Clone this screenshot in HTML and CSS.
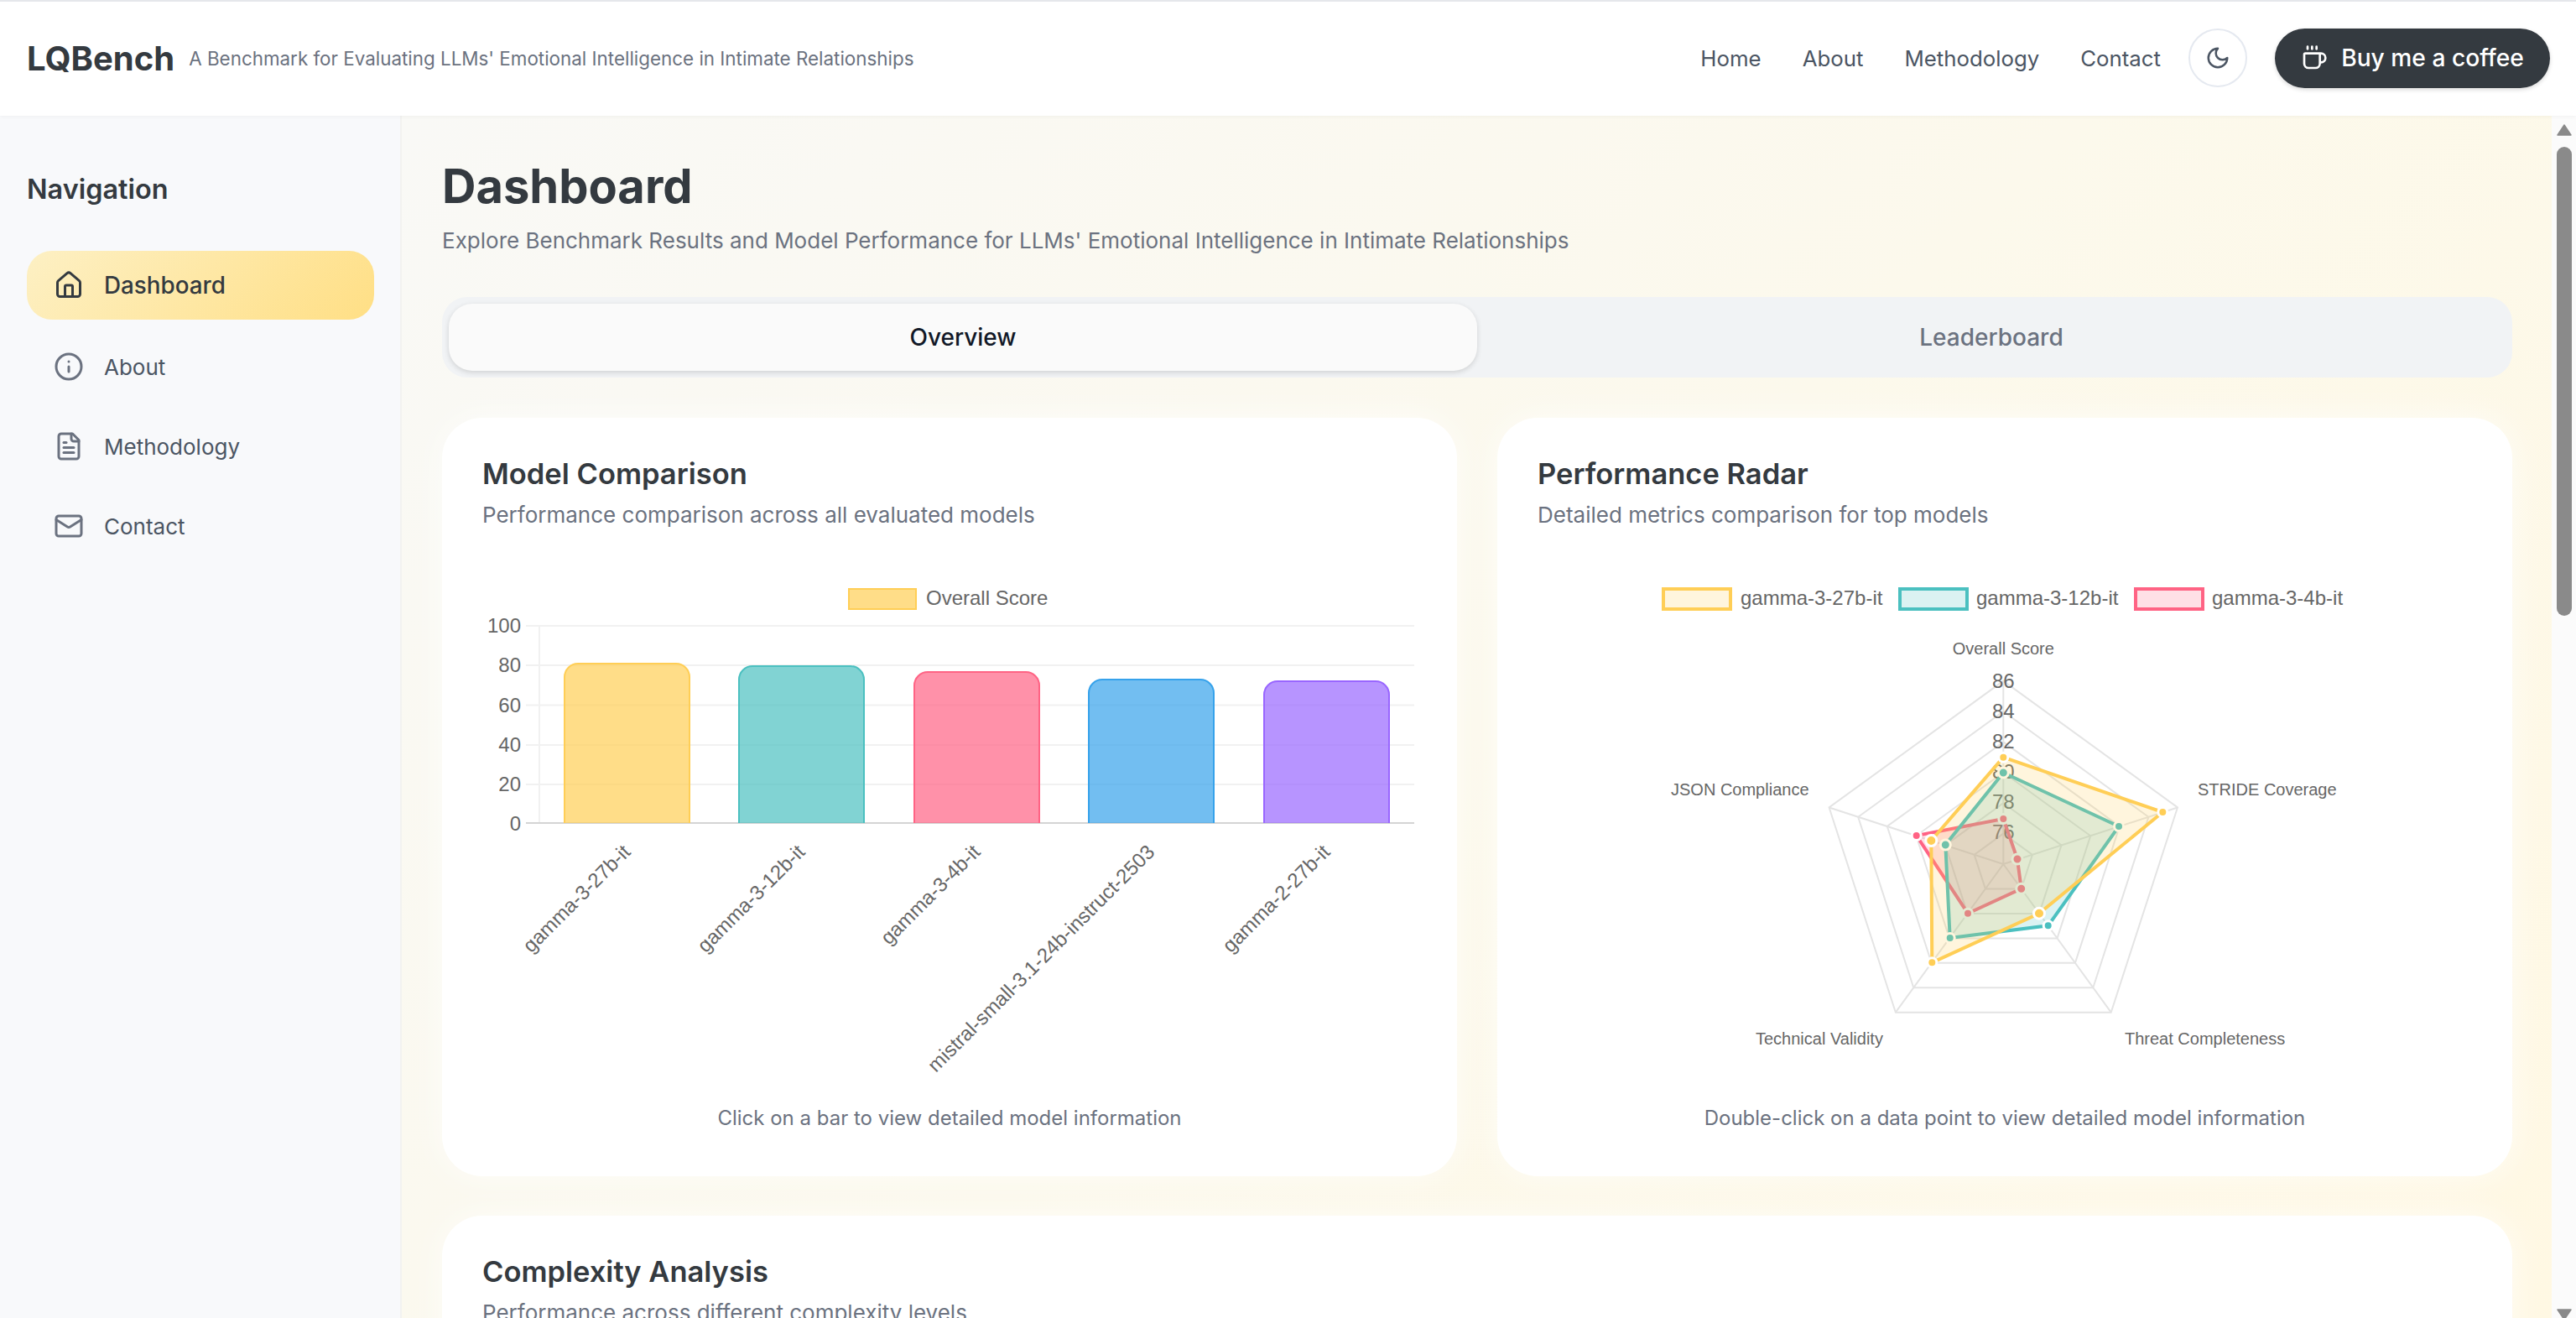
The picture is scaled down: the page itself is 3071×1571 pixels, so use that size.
FILE: index.html
```html
<!DOCTYPE html>
<html lang="en">
<head>
<meta charset="utf-8">
<title>LQBench</title>
<link rel="stylesheet" href="styles.css">
</head>
<body>
<header class="topbar">
  <div class="brand">
    <span class="brand-name">LQBench</span>
    <span class="brand-tag">A Benchmark for Evaluating LLMs' Emotional Intelligence in Intimate Relationships</span>
  </div>
  <nav class="topnav">
    <a>Home</a><a>About</a><a>Methodology</a><a>Contact</a>
    <button class="theme-btn" aria-label="Theme">
      <svg class="ico-moon" viewBox="0 0 24 24"><path d="M12 3a6 6 0 0 0 9 9 9 9 0 1 1-9-9Z"/></svg>
    </button>
    <button class="coffee-btn">
      <svg class="ico-coffee" viewBox="0 0 24 24"><path d="M10 2v2"/><path d="M14 2v2"/><path d="M16 8a1 1 0 0 1 1 1v8a4 4 0 0 1-4 4H7a4 4 0 0 1-4-4V9a1 1 0 0 1 1-1h14a4 4 0 1 1 0 8h-1"/><path d="M6 2v2"/></svg>
      <span>Buy me a coffee</span>
    </button>
  </nav>
</header>
<div class="layout">
  <aside class="sidebar">
    <h2 class="side-title">Navigation</h2>
    <a class="side-item active">
      <svg class="ico" viewBox="0 0 24 24"><path d="M15 21v-8a1 1 0 0 0-1-1h-4a1 1 0 0 0-1 1v8"/><path d="M3 10a2 2 0 0 1 .709-1.528l7-5.999a2 2 0 0 1 2.582 0l7 5.999A2 2 0 0 1 21 10v9a2 2 0 0 1-2 2H5a2 2 0 0 1-2-2z"/></svg>
      <span>Dashboard</span>
    </a>
    <a class="side-item">
      <svg class="ico" viewBox="0 0 24 24"><circle cx="12" cy="12" r="10"/><path d="M12 16v-4"/><path d="M12 8h.01"/></svg>
      <span>About</span>
    </a>
    <a class="side-item">
      <svg class="ico" viewBox="0 0 24 24"><path d="M15 2H6a2 2 0 0 0-2 2v16a2 2 0 0 0 2 2h12a2 2 0 0 0 2-2V7Z"/><path d="M14 2v4a2 2 0 0 0 2 2h4"/><path d="M10 9H8"/><path d="M16 13H8"/><path d="M16 17H8"/></svg>
      <span>Methodology</span>
    </a>
    <a class="side-item">
      <svg class="ico" viewBox="0 0 24 24"><rect width="20" height="16" x="2" y="4" rx="2"/><path d="m22 7-8.97 5.7a1.94 1.94 0 0 1-2.06 0L2 7"/></svg>
      <span>Contact</span>
    </a>
  </aside>
  <main class="main">
    <h1 class="page-title">Dashboard</h1>
    <p class="page-sub">Explore Benchmark Results and Model Performance for LLMs' Emotional Intelligence in Intimate Relationships</p>
    <div class="tabs">
      <button class="tab current">Overview</button>
      <button class="tab">Leaderboard</button>
    </div>
    <div class="grid">
      <section class="card">
        <h3 class="card-title">Model Comparison</h3>
        <p class="card-sub">Performance comparison across all evaluated models</p>
        <svg class="chart" viewBox="576 680 1114 620">
          <rect class="lg-y" x="1013" y="702" width="80" height="24"/>
          <text class="tx" x="1105" y="721">Overall Score</text>
          <g class="grid-lines">
            <path d="M628 746H1687M628 793H1687M628 840.500H1687M628 888H1687M628 935H1687M644 746V981"/>
          </g>
          <path class="axis" d="M628 981H1687"/>
          <path class="b-y" d="M674 981V807a16 16 0 0 1 16-16H807a16 16 0 0 1 16 16V981"/>
          <path class="b-t" d="M882 981V810a16 16 0 0 1 16-16H1015a16 16 0 0 1 16 16V981"/>
          <path class="b-p" d="M1091 981V817a16 16 0 0 1 16-16H1224a16 16 0 0 1 16 16V981"/>
          <path class="b-b" d="M1299 981V826a16 16 0 0 1 16-16H1432a16 16 0 0 1 16 16V981"/>
          <path class="b-v" d="M1508 981V828a16 16 0 0 1 16-16H1641a16 16 0 0 1 16 16V981"/>
          <g class="tx end">
            <text x="622" y="754">100</text>
            <text x="622" y="801">80</text>
            <text x="622" y="849">60</text>
            <text x="622" y="896">40</text>
            <text x="622" y="943">20</text>
            <text x="622" y="990">0</text>
          </g>
          <g class="tx end">
            <text transform="translate(754 1017) rotate(-45)">gamma-3-27b-it</text>
            <text transform="translate(962 1017) rotate(-45)">gamma-3-12b-it</text>
            <text transform="translate(1171 1017) rotate(-45)">gamma-3-4b-it</text>
            <text transform="translate(1379 1017) rotate(-45)">mistral-small-3.1-24b-instruct-2503</text>
            <text transform="translate(1588 1017) rotate(-45)">gamma-2-27b-it</text>
          </g>
        </svg>
        <p class="caption">Click on a bar to view detailed model information</p>
      </section>
      <section class="card">
        <h3 class="card-title">Performance Radar</h3>
        <p class="card-sub">Detailed metrics comparison for top models</p>
        <svg class="chart" viewBox="1833 680 1114 620">
          <rect class="lg-1" x="1983" y="702" width="80" height="24"/>
          <text class="tx" x="2075" y="721">gamma-3-27b-it</text>
          <rect class="lg-2" x="2265" y="702" width="80" height="24"/>
          <text class="tx" x="2356" y="721">gamma-3-12b-it</text>
          <rect class="lg-3" x="2546" y="702" width="80" height="24"/>
          <text class="tx" x="2637" y="721">gamma-3-4b-it</text>
          <g class="rings">
            <path d="M2388.300 811.600L2596 962.500L2516.700 1206.700H2259.900L2180.600 962.500Z"/>
            <path d="M2388.300 848L2561.400 973.800L2495.300 1177.200H2281.300L2215.200 973.800Z"/>
            <path d="M2388.300 884.400L2526.800 985L2473.900 1147.800H2302.700L2249.800 985Z"/>
            <path d="M2388.300 920.800L2492.200 996.300L2452.500 1118.400H2324.100L2284.400 996.300Z"/>
            <path d="M2388.300 957.200L2457.500 1007.500L2431.100 1088.900H2345.500L2319.100 1007.500Z"/>
            <path d="M2388.300 993.600L2422.900 1018.800L2409.700 1059.400H2366.900L2353.700 1018.800Z"/>
            <path d="M2388.300 1030V811.600M2388.300 1030L2596 962.500M2388.300 1030L2516.700 1206.700M2388.300 1030L2259.900 1206.700M2388.300 1030L2180.600 962.500"/>
          </g>
          <g class="tx small">
            <text class="mid" x="2388.300" y="780">Overall Score</text>
            <text x="2620" y="948">STRIDE Coverage</text>
            <text x="2533" y="1245">Threat Completeness</text>
            <text x="2093" y="1245">Technical Validity</text>
            <text x="1992" y="948">JSON Compliance</text>
          </g>
          <g class="tx mid">
            <text x="2388.300" y="820">86</text>
            <text x="2388.300" y="856">84</text>
            <text x="2388.300" y="892">82</text>
            <text x="2388.300" y="928">80</text>
            <text x="2388.300" y="964">78</text>
            <text x="2388.300" y="1000">76</text>
          </g>
          <g class="ds ds-p">
            <path d="M2388.300 976L2405 1024L2409.700 1059.300L2346 1088.700L2284.700 996Z"/>
            <circle cx="2388.300" cy="976" r="5.500"/><circle cx="2405" cy="1024" r="6"/><circle cx="2409.700" cy="1059.300" r="6"/><circle cx="2346" cy="1088.700" r="5.500"/><circle cx="2284.700" cy="996" r="5.500"/>
          </g>
          <g class="ds ds-t">
            <path d="M2388.300 921L2526 985L2441.700 1103.300L2324.700 1118L2319.300 1007Z"/>
            <circle cx="2388.300" cy="921" r="6"/><circle cx="2526" cy="985" r="5.500"/><circle cx="2441.700" cy="1103.300" r="5.500"/><circle cx="2324.700" cy="1118" r="5.500"/><circle cx="2319.300" cy="1007" r="6"/>
          </g>
          <g class="ds ds-y">
            <path d="M2388.300 902.700L2578.300 968L2431 1088.700L2303.300 1147.300L2302.300 1002Z"/>
            <circle cx="2388.300" cy="902.700" r="5.500"/><circle cx="2578.300" cy="968" r="5.500"/><circle cx="2431" cy="1088.700" r="6.500"/><circle cx="2303.300" cy="1147.300" r="5.500"/><circle cx="2302.300" cy="1002" r="6.500"/>
          </g>
        </svg>
        <p class="caption">Double-click on a data point to view detailed model information</p>
      </section>
    </div>
    <section class="card wide">
      <h3 class="card-title">Complexity Analysis</h3>
      <p class="card-sub">Performance across different complexity levels</p>
    </section>
  </main>
  <div class="scrollbar" aria-hidden="true">
    <svg class="sb-arrow" viewBox="0 0 18 14"><path d="M9 1L17 13H1Z"/></svg>
    <div class="sb-thumb"></div>
    <svg class="sb-arrow sb-down" viewBox="0 0 18 14"><path d="M9 13L17 1H1Z"/></svg>
  </div>
</div>
</body>
</html>
```

FILE: styles.css
```css
* { box-sizing: border-box; }
html, body { margin: 0; height: 100%; overflow: hidden; }
body {
  font-family: Inter, "Noto Sans", "Liberation Sans", sans-serif;
  color: #343a40;
  background: #f8f9fb;
}
.topbar {
  height: 138px;
  border-top: 2px solid #e5e7eb;
  background: #fff;
  box-shadow: 0 2px 4px rgba(0, 0, 0, .03);
  position: relative;
  z-index: 2;
  display: flex;
  align-items: center;
  justify-content: space-between;
  padding: 0 31px 2px 32px;
}
.brand { display: flex; align-items: center; gap: 17px; }
.brand-name { font-size: 40px; font-weight: 700; }
.brand-tag { font-size: 22.400px; color: #6b7280; }
.topnav { display: flex; align-items: center; }
.topnav a { font-size: 25.800px; font-weight: 400; color: #4b5563; margin-right: 49px; }
.topnav a:nth-child(4) { margin-right: 33px; }
.theme-btn {
  width: 70px; height: 70px; border-radius: 50%;
  border: 2px solid #e5e9f0; background: #fff;
  display: flex; align-items: center; justify-content: center;
  padding: 0; margin-right: 33px;
}
.ico-moon { width: 30px; height: 30px; fill: none; stroke: #4b5563; stroke-width: 2; stroke-linecap: round; stroke-linejoin: round; }
.coffee-btn {
  height: 71px; width: 328px; border: 0; border-radius: 36px;
  background: #343a40; color: #fff;
  display: flex; align-items: center; justify-content: center; gap: 16px;
  font-family: inherit; font-size: 28.200px; font-weight: 500;
  box-shadow: 0 2px 5px rgba(0, 0, 0, .15);
}
.ico-coffee { width: 32px; height: 32px; fill: none; stroke: #fff; stroke-width: 2; stroke-linecap: round; stroke-linejoin: round; }
.layout { display: flex; height: 1446px; }
.sidebar {
  width: 479px; flex: none;
  background: #f8f9fb;
  border-right: 2px solid #f2f2f0;
  padding: 68px 32px 0;
}
.side-title { font-size: 32.400px; font-weight: 600; margin: 0 0 53px; line-height: 40px; }
.side-item {
  height: 82px; width: 414px;
  display: flex; align-items: center; gap: 24px;
  padding: 0 32px;
  font-size: 26px; font-weight: 400; color: #4b5563;
  border-radius: 30px;
  margin-bottom: 13px;
}
.side-item.active {
  background: linear-gradient(135deg, #fdf0c4, #ffdf85);
  color: #343a40;
  margin-bottom: 15px;
  font-size: 27.800px;
  font-weight: 500;
}
.ico { width: 36px; height: 36px; flex: none; fill: none; stroke: #6b7280; stroke-width: 2; stroke-linecap: round; stroke-linejoin: round; }
.active .ico { stroke: #343a40; }
.main {
  flex: 1; min-width: 0;
  overflow: hidden;
  background: linear-gradient(135deg, #f9f9f6 0%, #fcf9ec 50%, #fff8e3 100%);
  padding: 49px 47px 48px 48px;
}
.scrollbar {
  width: 29px; flex: none;
  background: #fbfbfb;
  display: flex; flex-direction: column; align-items: center;
  padding: 10px 0 10px 1px;
}
.sb-arrow { width: 18px; height: 14px; flex: none; fill: #8a8a8a; stroke: #8a8a8a; stroke-width: 1.500; stroke-linejoin: round; }
.sb-thumb { width: 18px; height: 559px; margin-top: 13px; background: #8a8a8a; border-radius: 9px; }
.sb-down { margin-top: auto; }
.page-title { font-size: 56px; line-height: 70px; font-weight: 700; margin: 0 0 12px; }
.page-sub { font-size: 26px; line-height: 36px; color: #6b7280; margin: 0 0 49px; }
.tabs {
  height: 96px; padding: 8px;
  display: grid; grid-template-columns: 1fr 1fr;
  background: #f1f3f5; border-radius: 30px;
  margin-bottom: 48px;
}
.tab {
  border: 0; background: transparent; border-radius: 28px;
  font-family: inherit; font-size: 28px; font-weight: 500; color: #6b7280;
}
.tab.current { background: #fafafa; color: #111827; box-shadow: 0 2px 6px rgba(0, 0, 0, .14); }
.grid { display: grid; grid-template-columns: 1fr 1fr; gap: 48px; margin-bottom: 47px; }
.card {
  background: #fff; border-radius: 48px;
  padding: 45px 48px 51px;
  box-shadow: 0 0 40px rgba(255, 255, 255, .7);
}
.card.wide { height: 600px; }
.card-title { font-size: 34.500px; line-height: 44px; font-weight: 600; margin: 0 0 9px; }
.card-sub { font-size: 26px; line-height: 36px; color: #6b7280; margin: 0 0 48px; }
.chart { display: block; width: 1114px; height: 620px; margin-bottom: 15px; }
.caption { font-size: 24px; line-height: 36px; color: #6b7280; text-align: center; margin: 0; }
.tx { font-family: "Liberation Sans", Arial, sans-serif; font-size: 24px; fill: #666; }
.tx.small { font-size: 20px; }
.end { text-anchor: end; }
.mid { text-anchor: middle; }
.grid-lines path { fill: none; stroke: #f1f1f1; stroke-width: 2; }
.axis { fill: none; stroke: #d4d4d4; stroke-width: 2; }
.b-y, .b-t, .b-p, .b-b, .b-v { stroke-width: 2; }
.b-y { fill: rgba(255, 206, 86, .7); stroke: rgb(255, 206, 86); }
.b-t { fill: rgba(75, 192, 192, .7); stroke: rgb(75, 192, 192); }
.b-p { fill: rgba(255, 99, 132, .7); stroke: rgb(255, 99, 132); }
.b-b { fill: rgba(54, 162, 235, .7); stroke: rgb(54, 162, 235); }
.b-v { fill: rgba(153, 102, 255, .7); stroke: rgb(153, 102, 255); }
.lg-y { fill: rgba(255, 206, 86, .7); stroke: rgb(255, 206, 86); stroke-width: 2; }
.lg-1, .lg-2, .lg-3 { stroke-width: 4; }
.lg-1 { fill: rgba(255, 206, 86, .2); stroke: rgb(255, 206, 86); }
.lg-2 { fill: rgba(75, 192, 192, .2); stroke: rgb(75, 192, 192); }
.lg-3 { fill: rgba(255, 99, 132, .2); stroke: rgb(255, 99, 132); }
.rings path { fill: none; stroke: #e4e4e4; stroke-width: 2; }
.ds path { stroke-width: 4; stroke-linejoin: miter; }
.ds circle { stroke: #fff; stroke-width: 3; }
.ds-y path { fill: rgba(255, 206, 86, .2); stroke: rgb(255, 206, 86); }
.ds-y circle { fill: rgb(255, 206, 86); }
.ds-t path { fill: rgba(75, 192, 192, .2); stroke: rgb(75, 192, 192); }
.ds-t circle { fill: rgb(75, 192, 192); }
.ds-p path { fill: rgba(255, 99, 132, .2); stroke: rgb(255, 99, 132); }
.ds-p circle { fill: rgb(255, 99, 132); }
```
